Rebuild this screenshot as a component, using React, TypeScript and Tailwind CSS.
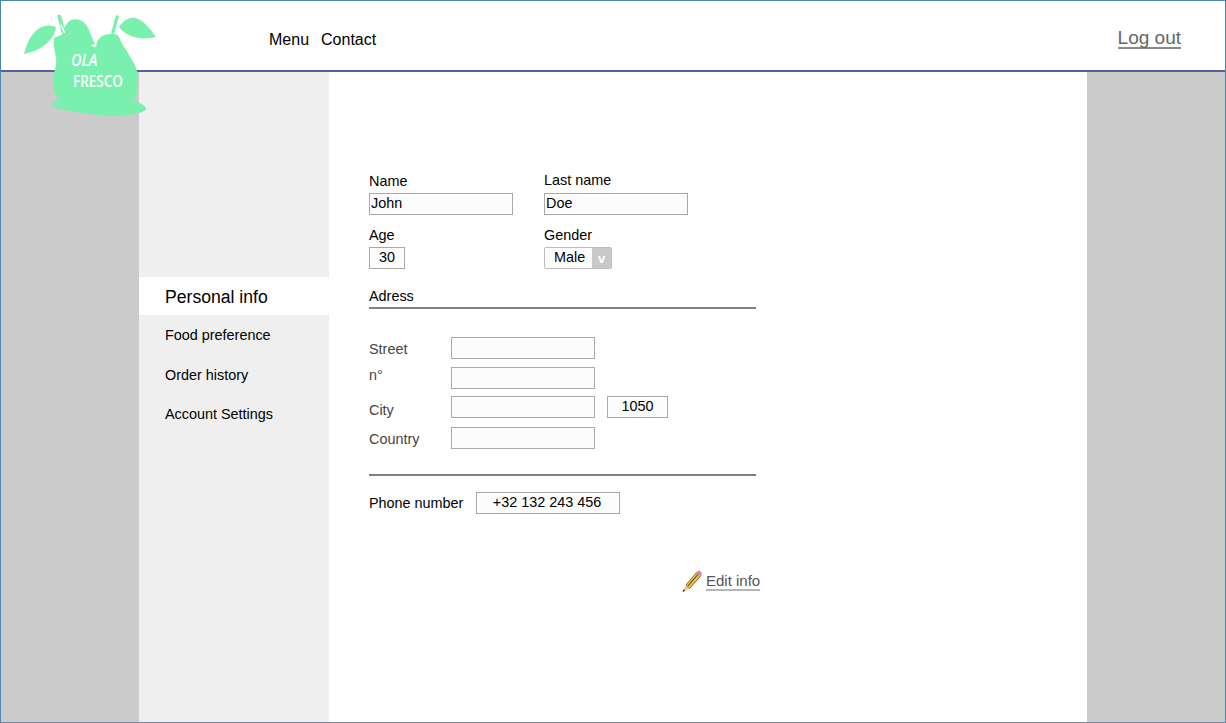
const font = "font-['Liberation_Sans',Arial,sans-serif]";

function Box({ value = '', className = '' }: { value?: string; className?: string }) {
  return (
    <div className={`h-[22px] shrink-0 border border-[#a9a9a9] bg-[#fcfcfc] text-[14.4px] leading-[18px] text-black ${className}`}>
      {value}
    </div>
  );
}

function Logo() {
  return (
    <svg className="absolute left-0 top-0 z-10" width="160" height="120" viewBox="0 0 160 120">
      <g fill="#7af0ae">
        <path d="M23 53C26 40 33 27 44 25C48 24 52 25 55 26C54 36 44 49 23 53Z" />
        <path d="M118 26C122 20 128 16 134 17C143 19 150 29 155 36C143 39 127 38 118 26Z" />
        <path d="M56 14L60 14L65 32L61 33Z" />
        <path d="M115 14L118 15L113 33L110 32Z" />
        <path d="M53 37L62 33C63 26 66 21 70 19C76 17 83 19 87 27C90 33 92 40 95 45C96 38 100 34 108 33C113 32 117 33 118 36C120 42 124 47 127 52C131 60 137 66 137 78C137 88 136 94 133 100L58 98C53 94 51 85 52 77C53 70 56 65 55 57C54 50 52 44 53 37Z" />
        <path d="M51 103C54 99 62 97 72 97L134 100C140 103 146 105 145 108C142 113 125 115 112 115C95 114 72 111 62 109C56 108 52 106 51 103Z" />
      </g>
      <path d="M60 23L63.500 32" stroke="#fff" strokeWidth="1.5" />
      <path d="M90 44L94 46.500L96 43Z" fill="#fff" />
    </svg>
  );
}

function LogoText() {
  return (
    <div className="absolute left-[70px] top-[49px] z-20 font-['Open_Sans',sans-serif] font-semibold text-white">
      <div className="origin-left scale-x-[0.85] text-[17px] italic leading-[20px]">OLA</div>
      <div className="ml-[2px] mt-[1px] origin-left scale-x-[0.87] text-[15.5px] leading-[20px]">FRESCO</div>
    </div>
  );
}

function Pencil() {
  return (
    <svg width="22" height="24" viewBox="0 0 22 24" className="shrink-0">
      <path d="M5 16L16 3L20 6.500L8.500 19.500Z" fill="#f5c33b" stroke="#5a4a1a" strokeWidth="0.8" />
      <path d="M6.500 17.500L17.500 4.800" stroke="#2a2a2a" strokeWidth="1" />
      <path d="M15.500 3.500L17.500 1.500C18.500 1 20.500 2.500 21 4.500L19.800 6.800Z" fill="#e27fd8" />
      <path d="M5 16L8.500 19.500L1.500 23Z" fill="#e9c889" />
      <path d="M2.800 20.500L4.200 21.800L1.500 23Z" fill="#111" />
    </svg>
  );
}

function AddressRow({ label, labelClass = '', children, className = '' }: { label: string; labelClass?: string; children?: React.ReactNode; className?: string }) {
  return (
    <div className={`flex items-center ${className}`}>
      <span className={`w-[82px] text-[14.4px] leading-[14px] text-[#444] ${labelClass}`}>{label}</span>
      <Box className="w-[144px]" />
      {children}
    </div>
  );
}

export default function App() {
  return (
    <div className={`relative flex h-[723px] w-[1226px] flex-col overflow-hidden border border-[#4f86b0] border-b-[#7a8a99] bg-white ${font}`}>
      <Logo />
      <LogoText />

      <header className="flex h-[71px] shrink-0 items-center border-b-2 border-[#5560a0] bg-white pr-[44px] pt-[8px]">
        <nav className="ml-[268px] flex gap-[12px] text-[16px] text-black">
          <span>Menu</span>
          <span>Contact</span>
        </nav>
        <span className="mb-[1px] ml-auto border-b-2 border-[#8a8a8a] text-[19px] leading-[18px] text-[#666]">Log out</span>
      </header>

      <div className="flex min-h-0 flex-1">
        <div className="w-[138px] shrink-0 bg-[#cbcbcb]" />

        <aside className="w-[190px] shrink-0 bg-[#efefef] pt-[205px]">
          <div className="flex h-[38px] items-center bg-white pl-[26px] pt-[2px] text-[17.6px] text-black">Personal info</div>
          <div className="mt-[11px] pl-[26px] text-[14.4px] leading-[18px] text-black">Food preference</div>
          <div className="mt-[22px] pl-[26px] text-[14.4px] leading-[18px] text-black">Order history</div>
          <div className="mt-[21px] pl-[26px] text-[14.4px] leading-[18px] text-black">Account Settings</div>
        </aside>

        <main className="flex-1 bg-white pl-[40px] pt-[100px]">
          <div className="flex">
            <div className="w-[175px]">
              <div className="text-[14.4px] leading-[18px] text-black">Name</div>
              <Box value="John" className="mt-[3px] w-[144px] pl-[1px]" />
            </div>
            <div>
              <div className="-mt-[1px] text-[14.4px] leading-[18px] text-black">Last name</div>
              <Box value="Doe" className="mt-[4px] w-[144px] pl-[1px]" />
            </div>
          </div>

          <div className="mt-[11px] flex">
            <div className="w-[175px]">
              <div className="text-[14.4px] leading-[18px] text-black">Age</div>
              <Box value="30" className="mt-[3px] w-[36px] text-center" />
            </div>
            <div>
              <div className="text-[14.4px] leading-[18px] text-black">Gender</div>
              <div className="mt-[3px] flex h-[22px] w-[68px] rounded-[2px] border border-[#bdbdbd] bg-[#fcfcfc] text-[14.4px] leading-[18px]">
                <span className="w-[47px] pl-[9px] text-black">Male</span>
                <span className="flex-1 bg-[#c9c9c9] text-center text-[13px] font-bold leading-[22px] text-white">v</span>
              </div>
            </div>
          </div>

          <div className="mt-[18px] w-[387px] border-b-2 border-[#808080] pb-[2px] text-[14.4px] leading-[18px] text-black">Adress</div>

          <div className="mt-[28px] w-[387px]">
            <AddressRow label="Street" labelClass="pt-[2px]" />
            <AddressRow label="n°" labelClass="pb-[6px]" className="mt-[8px]" />
            <AddressRow label="City" labelClass="pt-[6px]" className="mt-[7px]">
              <Box value="1050" className="ml-[12px] w-[61px] text-center" />
            </AddressRow>
            <AddressRow label="Country" labelClass="pt-[2px]" className="mt-[9px]" />
          </div>

          <div className="mt-[25px] h-[2px] w-[387px] bg-[#808080]" />

          <div className="mt-[16px] flex items-center">
            <span className="w-[107px] text-[14.4px] leading-[14px] text-black">Phone number</span>
            <Box value="+32 132 243 456" className="w-[144px] pr-[2px] text-center" />
          </div>

          <div className="ml-[312px] mt-[55px] flex items-start">
            <Pencil />
            <span className="ml-[3px] mt-[3px] border-b-2 border-[#b5b5b5] text-[15px] leading-[17px] text-[#555]">Edit info</span>
          </div>
        </main>

        <div className="w-[138px] shrink-0 bg-[#cbcbcb]" />
      </div>
    </div>
  );
}
